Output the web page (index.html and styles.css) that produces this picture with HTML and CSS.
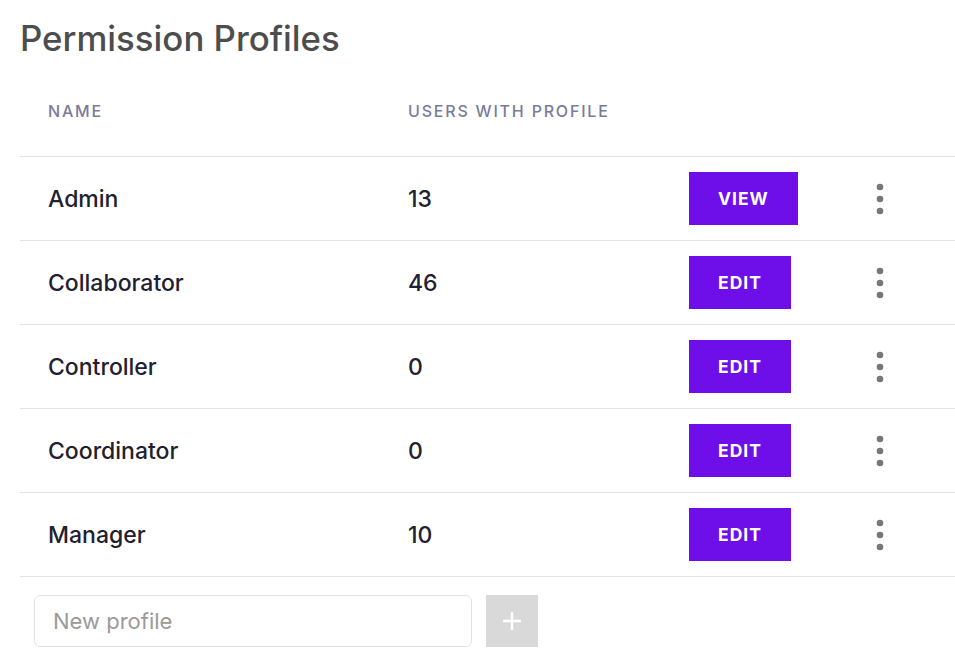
FILE: index.html
```html
<!DOCTYPE html>
<html lang="en">
<head>
<meta charset="utf-8">
<title>Permission Profiles</title>
<link rel="stylesheet" href="styles.css">
</head>
<body>
<main class="page">
  <h1 class="title">Permission Profiles</h1>
  <div class="table">
    <div class="row head">
      <div class="cell">NAME</div>
      <div class="cell">USERS WITH PROFILE</div>
      <div class="cell"></div>
      <div class="cell"></div>
    </div>
    <div class="row">
      <div class="cell name">Admin</div>
      <div class="cell count">13</div>
      <div class="cell"><button class="btn">VIEW</button></div>
      <div class="cell dots"><svg width="8" height="32" viewBox="0 0 8 32"><circle cx="4" cy="4" r="3.3"/><circle cx="4" cy="16" r="3.3"/><circle cx="4" cy="28" r="3.3"/></svg></div>
    </div>
    <div class="row">
      <div class="cell name">Collaborator</div>
      <div class="cell count">46</div>
      <div class="cell"><button class="btn">EDIT</button></div>
      <div class="cell dots"><svg width="8" height="32" viewBox="0 0 8 32"><circle cx="4" cy="4" r="3.3"/><circle cx="4" cy="16" r="3.3"/><circle cx="4" cy="28" r="3.3"/></svg></div>
    </div>
    <div class="row">
      <div class="cell name">Controller</div>
      <div class="cell count">0</div>
      <div class="cell"><button class="btn">EDIT</button></div>
      <div class="cell dots"><svg width="8" height="32" viewBox="0 0 8 32"><circle cx="4" cy="4" r="3.3"/><circle cx="4" cy="16" r="3.3"/><circle cx="4" cy="28" r="3.3"/></svg></div>
    </div>
    <div class="row">
      <div class="cell name">Coordinator</div>
      <div class="cell count">0</div>
      <div class="cell"><button class="btn">EDIT</button></div>
      <div class="cell dots"><svg width="8" height="32" viewBox="0 0 8 32"><circle cx="4" cy="4" r="3.3"/><circle cx="4" cy="16" r="3.3"/><circle cx="4" cy="28" r="3.3"/></svg></div>
    </div>
    <div class="row last">
      <div class="cell name">Manager</div>
      <div class="cell count">10</div>
      <div class="cell"><button class="btn">EDIT</button></div>
      <div class="cell dots"><svg width="8" height="32" viewBox="0 0 8 32"><circle cx="4" cy="4" r="3.3"/><circle cx="4" cy="16" r="3.3"/><circle cx="4" cy="28" r="3.3"/></svg></div>
    </div>
  </div>
  <form class="new-profile">
    <input class="new-input" type="text" placeholder="New profile">
    <button class="add-btn" type="button" aria-label="Add profile"><svg width="20" height="20" viewBox="0 0 20 20"><path d="M10 1v18M1 10h18" stroke="#fff" stroke-width="2.4"/></svg></button>
  </form>
</main>
</body>
</html>
```

FILE: styles.css
```css
html, body {
  margin: 0;
  padding: 0;
  background: #ffffff;
}

body {
  font-family: Inter, "Noto Sans", sans-serif;
  color: #1f2030;
}

.page {
  padding: 0 0 0 20px;
  width: 935px;
}

.title {
  margin: 0;
  padding-top: 18px;
  font-size: 34.8px;
  line-height: 41px;
  font-weight: 500;
  color: #4d4d4d;
  letter-spacing: 0;
}

.table {
  margin-top: 42px;
}

.row {
  display: grid;
  grid-template-columns: 360px 281px 161px 60px;
  align-items: center;
  padding-left: 28px;
  height: 83px;
  border-bottom: 1px solid #e3e3e3;
}

.row.head {
  height: 54px;
  padding-top: 1px;
  align-items: start;
  font-size: 16px;
  font-weight: 500;
  letter-spacing: 1.8px;
  color: #787c9c;
  line-height: 19px;
}

.name, .count {
  font-size: 23px;
  font-weight: 500;
  color: #1f2030;
}

.btn {
  height: 53px;
  padding: 0 29px;
  border: 0;
  border-radius: 0;
  background: #6e0fea;
  color: #ffffff;
  font-family: Inter, "Noto Sans", sans-serif;
  font-size: 17.5px;
  font-weight: 700;
  letter-spacing: 1px;
  display: block;
}

.dots {
  display: flex;
  justify-content: center;
}

.dots svg {
  fill: #777777;
  display: block;
}

.new-profile {
  display: flex;
  gap: 14px;
  margin: 18px 0 0 14px;
}

.new-input {
  box-sizing: border-box;
  width: 438px;
  height: 52px;
  border: 1px solid #e2e2e2;
  border-radius: 6px;
  padding: 0 18px;
  font-family: Inter, "Noto Sans", sans-serif;
  font-size: 22px;
  color: #333;
  outline: none;
}

.new-input::placeholder {
  color: #9a9a9a;
}

.add-btn {
  width: 52px;
  height: 52px;
  border: 0;
  background: #d9d9d9;
  display: flex;
  align-items: center;
  justify-content: center;
  padding: 0;
}
```
